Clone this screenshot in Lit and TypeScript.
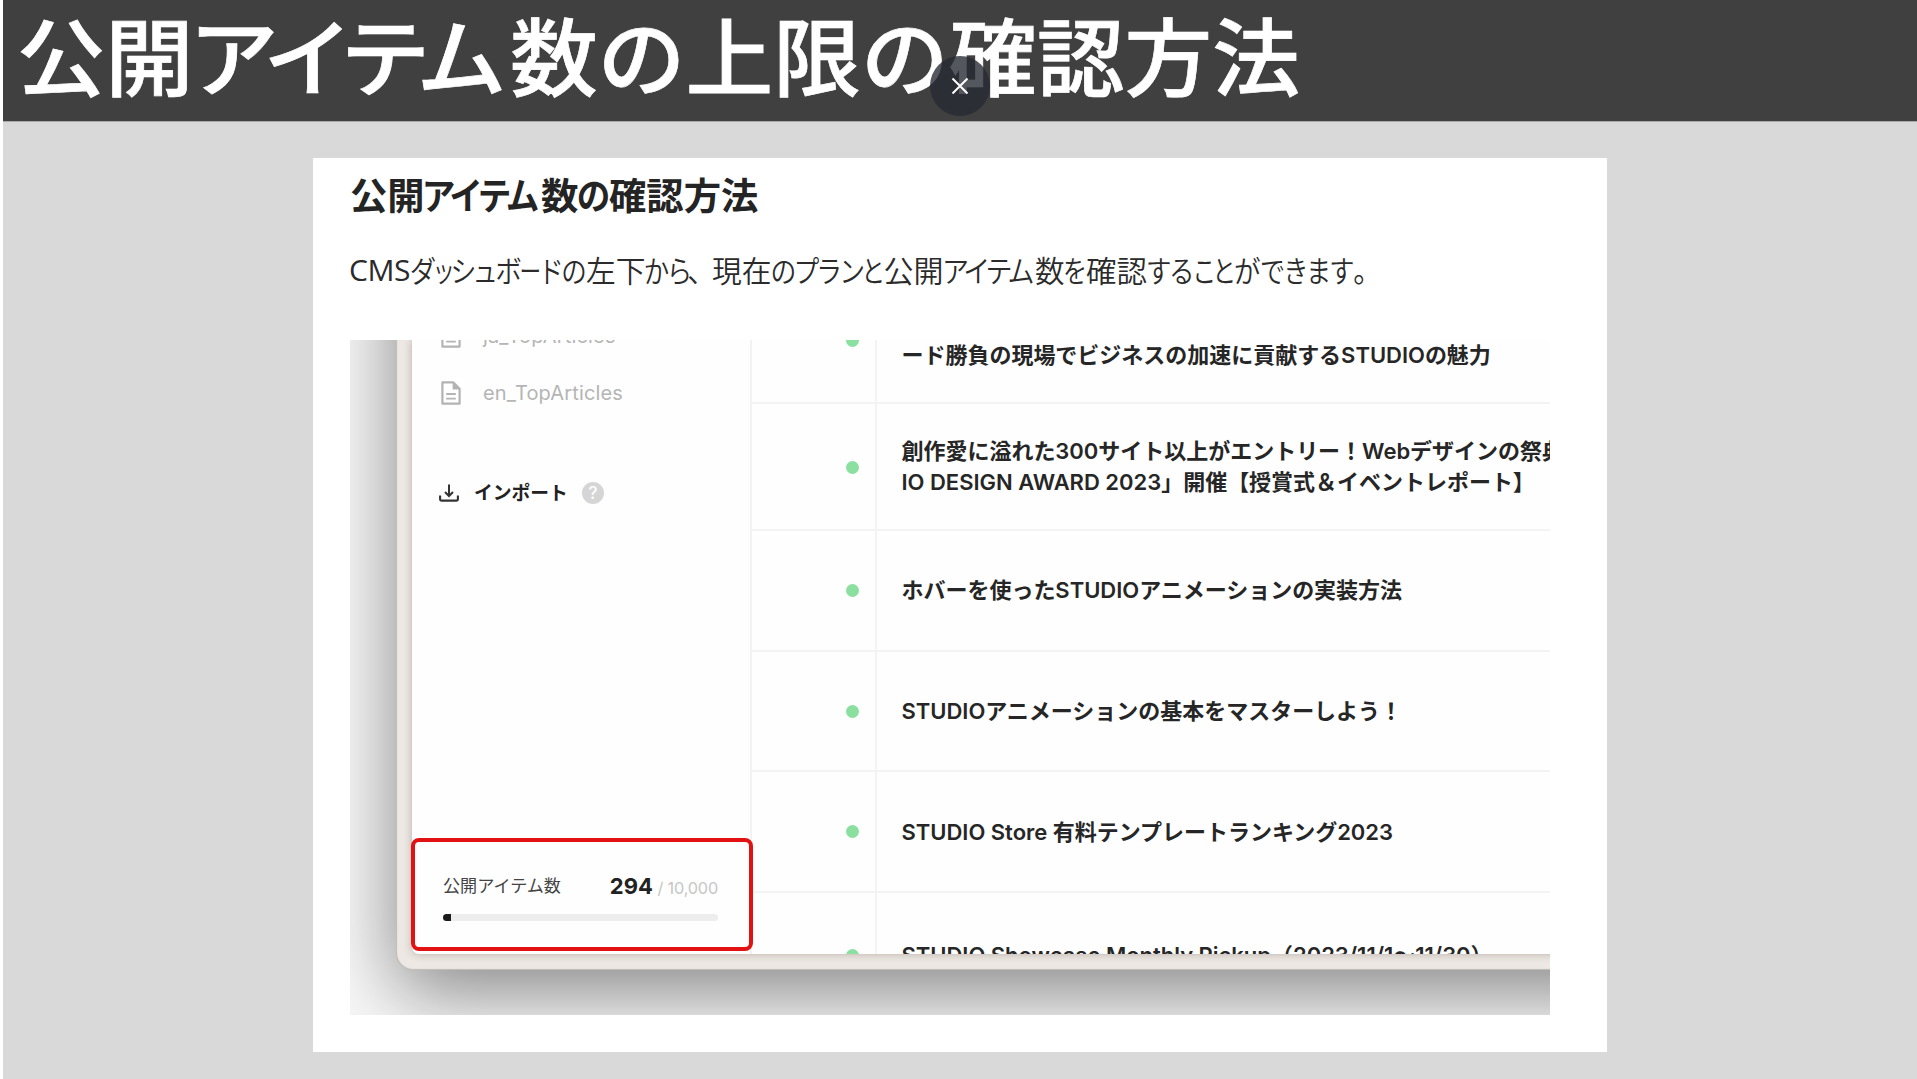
import { LitElement, html, css, svg } from "lit";
import { customElement, property } from "lit/decorators.js";

/**
 * A stretch of full-width characters and the width it is set to, in pixels.
 * The optional stretch is the horizontal scale of the glyphs; without it they
 * are scaled by the same amount as the run.
 */
type Run = [text: string, width: number, stretch?: number];

const TITLE: Run[] = [
  ["公開", 176.5],
  ["アイテム", 316, 1.06],
  ["数の上限の確認方法", 790],
];

const HEADING: Run[] = [
  ["公開", 74.5],
  ["アイテム", 116.5, 0.9],
  ["数", 37.5],
  ["の", 31, 0.9],
  ["確認方法", 149.4],
];

const LEAD: Run[] = [
  ["ダ", 24, 0.88],
  ["ッ", 17.5, 0.75],
  ["シ", 23, 0.86],
  ["ュ", 20.5, 0.85],
  ["ボ", 25.5, 0.88],
  ["ー", 18.5, 0.72],
  ["ド", 22, 0.85],
  ["の", 24, 0.85],
  ["左下", 59.5],
  ["から", 46, 0.85],
  ["、", 21, 0.95],
  ["現在", 59.5],
  ["のプラン", 91.5, 0.86],
  ["と", 20.5, 0.8],
  ["公開", 60],
  ["アイテム", 91, 0.9],
  ["数", 29.5],
  ["を", 22, 0.8],
  ["確認", 61],
  ["する", 46.5, 0.85],
  ["こと", 40.5, 0.8],
  ["が", 26.5],
  ["でき", 46.5, 0.84],
  ["ます", 46.5, 0.84],
  ["。", 27, 0.95],
];

@customElement("condensed-line")
class CondensedLine extends LitElement {
  @property({ attribute: false }) runs: Run[] = [];
  @property({ type: Number }) size = 16;
  @property() latin = "";

  static styles = css`
    :host {
      display: flex;
      white-space: nowrap;
    }
    .run {
      flex: none;
    }
    .glyphs {
      display: inline-block;
      transform-origin: 0 50%;
    }
    .latin {
      flex: none;
      font-family: "Open Sans", "Noto Sans", sans-serif;
      font-weight: 400;
      width: 61.5px;
      letter-spacing: -0.4px;
      padding-top: 1px;
    }
  `;

  private renderRun([text, width, stretch]: Run) {
    const scale = stretch ?? width / (text.length * this.size);
    const spacing = width / (text.length * scale) - this.size;
    const style = `letter-spacing:${spacing}px;transform:translateX(${(spacing * scale) / 2}px) scaleX(${scale})`;
    return html`<span class="run" style="width:${width}px"><span class="glyphs" style=${style}>${text}</span></span>`;
  }

  render() {
    return html`${this.latin ? html`<span class="latin">${this.latin}</span>` : ""}${this.runs.map((run) =>
      this.renderRun(run)
    )}`;
  }
}

interface Article {
  lines: string[];
  kind: string;
}

const ARTICLES: Article[] = [
  { lines: ["ード勝負の現場でビジネスの加速に貢献するSTUDIOの魅力"], kind: "tall second" },
  {
    lines: [
      "創作愛に溢れた300サイト以上がエントリー！Webデザインの祭典",
      "IO DESIGN AWARD 2023」開催【授賞式＆イベントレポート】",
    ],
    kind: "tall",
  },
  { lines: ["ホバーを使ったSTUDIOアニメーションの実装方法"], kind: "" },
  { lines: ["STUDIOアニメーションの基本をマスターしよう！"], kind: "" },
  { lines: ["STUDIO Store 有料テンプレートランキング2023"], kind: "" },
  { lines: ["STUDIO Showcase Monthly Pickup（2023/11/1〜11/30）"], kind: "last" },
];

const docIcon = html`<svg class="doc" viewBox="0 0 20 24">
  ${svg`<path d="M1.4 1.4H12.2L18.6 7.8V22.6H1.4Z" fill="none" stroke="#b3b3b3" stroke-width="2.2" stroke-linejoin="round"/>
  <path d="M11.6 1.2V8.4H18.8Z" fill="#b3b3b3"/>
  <path d="M5.2 13H14.8M5.2 17.6H14.8" stroke="#b3b3b3" stroke-width="1.9"/>`}
</svg>`;

const importIcon = html`<svg class="import-icon" viewBox="0 0 20 18">
  ${svg`<path d="M1.1 11.4V15Q1.1 16.6 2.8 16.6H17.2Q18.9 16.6 18.9 15V11.4" fill="none" stroke="#333" stroke-width="2.1"/>
  <path d="M10 0.6V11" stroke="#333" stroke-width="2"/>
  <path d="M6 8L10 12L14 8" fill="none" stroke="#333" stroke-width="2"/>`}
</svg>`;

@customElement("app-root")
class AppRoot extends LitElement {
  static styles = css`
    :host {
      display: block;
      box-sizing: border-box;
      width: 1917px;
      height: 1079px;
      padding-left: 3px;
      overflow: hidden;
      position: relative;
      background: #fff;
      font-family: "Noto Sans CJK JP", sans-serif;
    }
    *,
    *::before {
      box-sizing: border-box;
    }
    .page {
      height: 1079px;
      background: #d9d9d9;
      display: flex;
      flex-direction: column;
    }
    .header {
      flex: none;
      height: 122px;
      background: #404040;
      border-bottom: 1px solid #a9a9a9;
      padding-left: 14px;
    }
    .title {
      font-size: 85px;
      line-height: 106px;
      font-weight: 500;
      color: #fff;
      -webkit-text-stroke: 0.7px #fff;
    }
    .close {
      position: absolute;
      left: 930px;
      top: 56px;
      width: 60px;
      height: 60px;
      border-radius: 50%;
      background: rgba(38, 42, 49, 0.79);
      display: flex;
      align-items: center;
      justify-content: center;
    }
    .close svg {
      width: 18px;
      height: 18px;
    }
    .card {
      margin: 36px 0 0 310px;
      width: 1294px;
      height: 894px;
      background: #fff;
      padding: 15px 0 0 37px;
    }
    .heading {
      font-size: 37.3px;
      line-height: 42px;
      font-weight: 700;
      color: #242424;
      margin-left: -0.5px;
    }
    .lead {
      height: 40px;
      margin-top: 34px;
      margin-left: -1px;
      font-size: 30px;
      line-height: 40px;
      font-weight: 350;
      color: #2b2b2b;
    }
    .figure {
      margin-top: 51px;
      width: 1200px;
      height: 675px;
      overflow: hidden;
      background: #f8f8f8;
      display: flex;
      align-items: flex-end;
      padding: 0 0 45px 45.5px;
    }
    .device {
      flex: none;
      width: 1400px;
      height: 830px;
      padding: 200px 0 16px 16px;
      background: #ede8e3;
      border-radius: 0 0 0 16px;
      box-shadow: 0 22px 78px rgba(0, 0, 0, 0.47), inset 1px -1px 1px rgba(0, 0, 0, 0.2);
    }
    .screen {
      position: relative;
      height: 614px;
      background: #fefefe;
      border-radius: 0 0 0 7px;
      display: flex;
      box-shadow: 0 0 8px rgba(60, 40, 30, 0.3);
      font-family: Inter, "Noto Sans CJK JP", sans-serif;
      clip-path: inset(0 0 -12px -12px);
    }
    .sidebar {
      flex: none;
      width: 340px;
      border-right: 2px solid #f2f2f2;
      display: flex;
      flex-direction: column;
      overflow: hidden;
    }
    .model {
      flex: none;
      height: 57px;
      display: flex;
      align-items: center;
      padding-left: 29px;
      gap: 22.5px;
      font-size: 20px;
      line-height: 28px;
      letter-spacing: 0.15px;
      color: #b5b5b5;
    }
    .model.first {
      margin-top: -32.5px;
    }
    .doc {
      width: 20px;
      height: 24px;
      flex: none;
    }
    .import {
      flex: none;
      height: 30px;
      margin-top: 56.5px;
      padding-left: 27.5px;
      display: flex;
      align-items: center;
      font-size: 18.8px;
      line-height: 30px;
      font-weight: 700;
      color: #222;
    }
    .import-icon {
      width: 20px;
      height: 18px;
      margin-right: 15px;
    }
    .import-label {
      padding-top: 1px;
    }
    .help {
      margin-left: 14px;
      width: 22px;
      height: 22px;
      border-radius: 50%;
      background: #d5d5d5;
      color: #fff;
      font-size: 17px;
      line-height: 22px;
      font-weight: 500;
      text-align: center;
    }
    .usage {
      position: absolute;
      left: -0.5px;
      top: 498px;
      width: 342px;
      height: 113px;
      border: 4px solid #e31212;
      border-radius: 8px;
      background: #fefefe;
      padding: 1.5px 31px 0 28px;
    }
    .counts {
      height: 70.5px;
      display: flex;
      justify-content: space-between;
      align-items: flex-start;
      line-height: 30px;
      padding-top: 27px;
    }
    .label {
      font-size: 17.1px;
      color: #444;
    }
    .now {
      font-size: 22px;
      font-weight: 700;
      color: #222;
      letter-spacing: 0.1px;
    }
    .max {
      font-size: 16.3px;
      color: #c6c6c6;
      margin-left: 4.5px;
      letter-spacing: -0.2px;
    }
    .bar {
      height: 7px;
      border-radius: 4px;
      background: #ededed;
      overflow: hidden;
    }
    .fill {
      height: 7px;
      background: #1c1c1c;
    }
    .rows {
      flex: 1;
      height: 614px;
      overflow: hidden;
    }
    .row {
      height: 120.6px;
      display: flex;
      border-bottom: 2px solid #f3f3f3;
    }
    .row.tall {
      height: 127px;
    }
    .row.second {
      margin-top: -63px;
    }
    .row.last {
      height: 126px;
    }
    .state {
      flex: none;
      width: 125px;
      border-right: 2px solid #f3f3f3;
      display: flex;
      align-items: center;
      justify-content: flex-end;
      padding: 1px 15.5px 0 0;
    }
    .dot {
      width: 13px;
      height: 13px;
      border-radius: 50%;
      background: #8be0a0;
    }
    .name {
      flex: none;
      display: flex;
      flex-direction: column;
      justify-content: center;
      padding: 1.2px 0 0 25px;
      font-size: 22px;
      line-height: 31px;
      font-weight: 600;
      letter-spacing: -0.02px;
      color: #262626;
      white-space: nowrap;
    }
    .second .name {
      padding-top: 32.2px;
    }
  `;

  render() {
    return html`
      <div class="page">
        <div class="header">
          <condensed-line class="title" .runs=${TITLE} .size=${85}></condensed-line>
        </div>
        <div class="card">
          <condensed-line class="heading" .runs=${HEADING} .size=${37.3}></condensed-line>
          <condensed-line class="lead" latin="CMS" .runs=${LEAD} .size=${30}></condensed-line>
          <div class="figure">
            <div class="device">
              <div class="screen">
                <div class="sidebar">
                  <div class="model first">${docIcon}<span>ja_TopArticles</span></div>
                  <div class="model">${docIcon}<span>en_TopArticles</span></div>
                  <div class="import">
                    ${importIcon}<span class="import-label">インポート</span><span class="help">?</span>
                  </div>
                </div>
                <div class="rows">
                  ${ARTICLES.map(
                    (a) => html`<div class="row ${a.kind}">
                      <div class="state"><span class="dot"></span></div>
                      <div class="name">${a.lines.map((line) => html`<span>${line}</span>`)}</div>
                    </div>`
                  )}
                </div>
                <div class="usage">
                  <div class="counts">
                    <span class="label">公開アイテム数</span>
                    <span><span class="now">294</span><span class="max">/ 10,000</span></span>
                  </div>
                  <div class="bar"><div class="fill" style="width:${(294 / 10000) * 100}%"></div></div>
                </div>
              </div>
            </div>
          </div>
        </div>
      </div>
      <div class="close">
        <svg viewBox="0 0 18 18">
          <path d="M1.5 1.5L16.5 16.5M16.5 1.5L1.5 16.5" stroke="#fff" stroke-width="2" fill="none" />
        </svg>
      </div>
    `;
  }
}
